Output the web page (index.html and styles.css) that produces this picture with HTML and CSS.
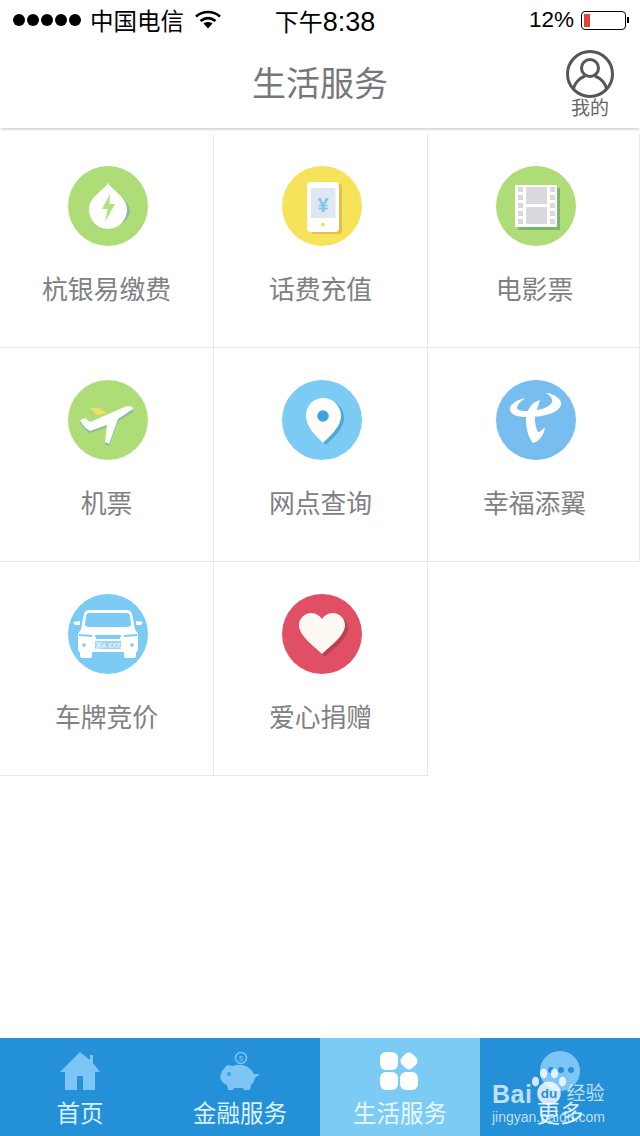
FILE: index.html
```html
<!DOCTYPE html>
<html lang="zh-CN">
<head>
    <meta charset="UTF-8">
    <meta name="viewport" content="width=device-width, initial-scale=1.0">
    <title>生活服务</title>
    <link rel="stylesheet" href="styles.css">
</head>

<body>
    <div class="page">
        <div class="statusbar">
            <div class="status-left">
                <div class="signal"><i></i><i></i><i></i><i></i><i></i></div>
                <span class="carrier">中国电信</span>
                <svg class="wifi" width="26" height="20" viewBox="0 0 26 20">
                    <path d="M1 6.500C8 .5 18 .5 25 6.500" fill="none" stroke="#000" stroke-width="2.600"/>
                    <path d="M5.500 11C10 7.200 16 7.200 20.500 11" fill="none" stroke="#000" stroke-width="2.600"/>
                    <path d="M8.500 13.500C11 11.500 15 11.500 17.500 13.500L13 18.500Z" fill="#000"/>
                </svg>
            </div>
            <div class="status-time">下午<span class="time-digits">8:38</span></div>
            <div class="status-right">
                <span class="percent">12%</span>
                <div class="battery"><div class="battery-level"></div></div>
                <div class="battery-tip"></div>
            </div>
        </div>

        <div class="navbar">
            <div></div>
            <div class="nav-title">生活服务</div>
            <div class="profile">
                <svg width="48" height="48" viewBox="0 0 48 48">
                    <defs><clipPath id="ring"><circle cx="24" cy="24" r="22.500"/></clipPath></defs>
                    <circle cx="24" cy="24" r="22.500" fill="none" stroke="#55555a" stroke-width="3"/>
                    <circle cx="24" cy="18" r="8.500" fill="none" stroke="#55555a" stroke-width="3"/>
                    <path d="M7 41C8 33 14 28 19 26M41 41C40 33 34 28 29 26" fill="none" stroke="#55555a" stroke-width="3" clip-path="url(#ring)"/>
                </svg>
                <span class="profile-label">我的</span>
            </div>
        </div>

        <div class="services">
            <div class="cell">
                <svg class="cell-icon" viewBox="0 0 80 80">
                    <circle cx="40" cy="40" r="40" fill="#aedd78"/>
                    <path d="M42 19C48 28 62 34 62 46A20 19 0 0 1 23 46C23 34 36 28 42 19Z" fill="#7fc0a0"/>
                    <path d="M40 17C46 26 59 31 59 43.500A19 19.500 0 0 1 21 43.500C21 31 34 26 40 17Z" fill="#fff"/>
                    <path d="M42 28L34 43H39.500L37 56L47 38H41.500Z" fill="#b6df85"/>
                </svg>
                <span class="cell-label">杭银易缴费</span>
            </div>
            <div class="cell">
                <svg class="cell-icon" viewBox="0 0 80 80">
                    <circle cx="40" cy="40" r="40" fill="#f6e35a"/>
                    <rect x="29" y="18" width="31" height="50" rx="3" fill="#e3c049"/>
                    <rect x="25" y="16" width="32" height="50" rx="4" fill="#fff"/>
                    <rect x="29" y="22" width="24.500" height="30" fill="#dfe8f2"/>
                    <text class="yen" x="41" y="46" text-anchor="middle">¥</text>
                    <circle cx="41" cy="58.500" r="1.800" fill="#f3d350"/>
                </svg>
                <span class="cell-label">话费充值</span>
            </div>
            <div class="cell">
                <svg class="cell-icon" viewBox="0 0 80 80">
                    <circle cx="40" cy="40" r="40" fill="#aedd78"/>
                    <rect x="22" y="22" width="42" height="42" fill="#7ab56a"/>
                    <rect x="19" y="19" width="42" height="42" fill="#fff"/>
                    <rect x="30" y="21" width="21" height="17" fill="#d9d9dd"/>
                    <rect x="30" y="41" width="21" height="17" fill="#d9d9dd"/>
                    <g fill="#d9d9dd">
                        <rect x="22" y="21" width="5" height="5"/><rect x="22" y="29" width="5" height="5"/><rect x="22" y="37" width="5" height="5"/><rect x="22" y="45" width="5" height="5"/><rect x="22" y="53" width="5" height="5"/>
                        <rect x="54" y="21" width="5" height="5"/><rect x="54" y="29" width="5" height="5"/><rect x="54" y="37" width="5" height="5"/><rect x="54" y="45" width="5" height="5"/><rect x="54" y="53" width="5" height="5"/>
                    </g>
                </svg>
                <span class="cell-label">电影票</span>
            </div>

            <div class="cell">
                <svg class="cell-icon" viewBox="0 0 80 80">
                    <circle cx="40" cy="40" r="40" fill="#aedd78"/>
                    <path d="M22 28L30 28L39 33L29 35Z" fill="#f2e05f"/>
                    <path d="M12 42L17 40L22 44L59 28Q66 28 65 32L50 41L41 66L37 64L39 47L22 53Q16 50 12 42Z" fill="#8cb8a0"/>
                    <path d="M12 40L17 38L22 42L59 26Q66 26 65 29L50 39L41 64L37 62L39 45L22 51Q16 48 12 40Z" fill="#fff"/>
                </svg>
                <span class="cell-label">机票</span>
            </div>
            <div class="cell">
                <svg class="cell-icon" viewBox="0 0 80 80">
                    <circle cx="40" cy="40" r="40" fill="#7ccbf5"/>
                    <path d="M44 20C54 20 62 28 62 38C62 49 50 59 44 65C38 59 27 49 27 38C27 28 34 20 44 20Z" fill="#4fa8d8"/>
                    <path d="M41 18C51 18 59 26 59 36C59 47 47 57 41 63C35 57 24 47 24 36C24 26 31 18 41 18Z" fill="#fefdf8"/>
                    <circle cx="41" cy="36" r="5.800" fill="#3fa4dc"/>
                </svg>
                <span class="cell-label">网点查询</span>
            </div>
            <div class="cell">
                <svg class="cell-icon" viewBox="0 0 80 80">
                    <circle cx="40" cy="40" r="40" fill="#78bdf0"/>
                    <path d="M29 18C20 20 13 25 14 30C15 35 22 37 30 37C40 37 52 36 60 31C66 27 67 22 62 18C59 15 54 13 50 13C55 16 58 20 55 24C50 29 40 31 30 31C25 31 21 30 21 28C21 25 25 21 29 18Z" fill="#fff"/>
                    <path d="M44 20C36 22 30 30 30 40C30 50 33 58 37 63C43 62 48 55 49 47C46 50 44 52 42 52C39 46 38 38 40 33C41 28 43 24 44 20Z" fill="#fff"/>
                </svg>
                <span class="cell-label">幸福添翼</span>
            </div>

            <div class="cell">
                <svg class="cell-icon" viewBox="0 0 80 80">
                    <circle cx="40" cy="40" r="40" fill="#7ccbf5"/>
                    <path d="M13 35L16 20Q17 16 22 16H58Q63 16 64 20L67 35L70 40V56Q70 58 68 58V62Q68 64 65 64H59Q56 64 56 62V58H24V62Q24 64 21 64H15Q12 64 12 62V58Q10 58 10 56V40Z" fill="#fff"/>
                    <path d="M18 22Q18 19 22 19H58Q62 19 62 22L63 30Q63 33 59 33H21Q17 33 17 30Z" fill="#7ccbf5"/>
                    <path d="M5 28L12 27L12 31L7 31ZM75 28L68 27L68 31L73 31Z" fill="#fff"/>
                    <path d="M11 40L24 41V43L11 42ZM69 40L56 41V43L69 42ZM27 41H53L52 45H28Z" fill="#7ccbf5"/>
                    <circle cx="16" cy="51" r="1.800" fill="#7ccbf5"/>
                    <circle cx="64" cy="51" r="1.800" fill="#7ccbf5"/>
                    <rect x="27" y="47" width="26" height="8" fill="#9fd3ee"/>
                    <text class="plate" x="40" y="53.500" text-anchor="middle">浙A XXX</text>
                </svg>
                <span class="cell-label">车牌竞价</span>
            </div>
            <div class="cell">
                <svg class="cell-icon" viewBox="0 0 80 80">
                    <circle cx="40" cy="40" r="40" fill="#e04f64"/>
                    <path d="M43 63C35 55 20 45 20 34C20 27 26 22 32 22C37 22 41 25 43 28C45 25 49 22 54 22C60 22 66 27 66 34C66 45 51 55 43 63Z" fill="#b84355"/>
                    <path d="M40 60C32 52 17 42 17 31C17 24 23 19 29 19C34 19 38 22 40 25C42 22 46 19 51 19C57 19 63 24 63 31C63 42 48 52 40 60Z" fill="#fdf8f2"/>
                </svg>
                <span class="cell-label">爱心捐赠</span>
            </div>
        </div>

        <div class="tabbar">
            <div class="tab">
                <svg class="tab-icon" viewBox="0 0 40 40">
                    <path d="M20 1L30 9V4H33V12L40 21H35V39H23V25H17V39H5V21H0Z" fill="#7cc5f5"/>
                </svg>
                <span>首页</span>
            </div>
            <div class="tab">
                <svg class="tab-icon" viewBox="0 0 40 40">
                    <circle cx="21" cy="7" r="5.500" fill="none" stroke="#7cc5f5" stroke-width="1.500"/>
                    <text class="coin" x="21" y="9.500" text-anchor="middle">$</text>
                    <path d="M7 14L13 15C20 12 30 14 34 23L40 23L35 27C34 31 32 33 31 34L30 39H24L23 37H14L13 39H8L7 34C4 33 1 30 0 26L2 20Z" fill="#7cc5f5"/>
                    <circle cx="9" cy="23" r="1.500" fill="none" stroke="#2390d8"/>
                </svg>
                <span>金融服务</span>
            </div>
            <div class="tab tab-active">
                <svg class="tab-icon" viewBox="0 0 40 40">
                    <rect x="0" y="1" width="18" height="18" rx="6" fill="#fff"/>
                    <rect x="21.500" y="2.500" width="15" height="15" rx="5" fill="#fff" transform="rotate(45 29 10)"/>
                    <rect x="0" y="21" width="18" height="18" rx="6" fill="#fff"/>
                    <rect x="20" y="21" width="18" height="18" rx="6" fill="#fff"/>
                </svg>
                <span>生活服务</span>
            </div>
            <div class="tab">
                <svg class="tab-icon" viewBox="0 0 40 40">
                    <circle cx="20" cy="20" r="20" fill="#7cc5f5"/>
                    <circle cx="11" cy="19" r="3" fill="#2390d8"/>
                    <circle cx="21" cy="19" r="3" fill="#2390d8"/>
                    <circle cx="31" cy="19" r="3" fill="#2390d8"/>
                </svg>
                <span>更多</span>
            </div>

            <div class="watermark">
                <div class="wm-top">
                    <span class="wm-bai">Bai</span>
                    <svg class="wm-paw" width="40" height="42" viewBox="0 0 40 42">
                        <g fill="#fff">
                            <ellipse cx="5" cy="15" rx="4" ry="5.500"/>
                            <ellipse cx="14" cy="6" rx="4" ry="5.500"/>
                            <ellipse cx="26" cy="6" rx="4" ry="5.500"/>
                            <ellipse cx="35" cy="15" rx="4" ry="5.500"/>
                            <circle cx="20" cy="28" r="13"/>
                        </g>
                        <text class="wm-du" x="20" y="33" text-anchor="middle">du</text>
                    </svg>
                    <span class="wm-jy">经验</span>
                </div>
                <div class="wm-url">jingyan.baidu.com</div>
            </div>
        </div>
    </div>
</body>
</html>
```

FILE: styles.css
```css
* {
    box-sizing: border-box;
}

body {
    margin: 0;
    background-color: #fff;
    font-family: "Liberation Sans", "Noto Sans CJK SC", sans-serif;
}

.page {
    width: 640px;
    height: 1136px;
    display: flex;
    flex-direction: column;
    overflow: hidden;
}

/* status bar */
.statusbar {
    height: 40px;
    padding: 0 11px 0 13px;
    display: grid;
    grid-template-columns: 1fr auto 1fr;
    align-items: center;
    color: #000;
}

.status-left {
    display: flex;
    align-items: center;
}

.signal {
    display: flex;
    gap: 2px;
    width: 77px;
}

.signal i {
    width: 12px;
    height: 12px;
    border-radius: 50%;
    background-color: #000;
}

.carrier {
    font-size: 23.500px;
}

.wifi {
    margin-left: 11px;
}

.status-time {
    padding-left: 8px;
    font-size: 24px;
}

.time-digits {
    font-size: 27px;
}

.status-right {
    display: flex;
    align-items: center;
    justify-content: flex-end;
}

.percent {
    font-size: 22.500px;
    margin-right: 7px;
}

.battery {
    width: 45px;
    height: 19px;
    padding: 2px;
    border: 1px solid #000;
    border-radius: 4px;
}

.battery-level {
    width: 6px;
    height: 100%;
    background-color: #e0453a;
}

.battery-tip {
    width: 2px;
    height: 6px;
    margin-left: 1px;
    background-color: #000;
}

/* nav */
.navbar {
    height: 88px;
    padding: 0 26px;
    display: grid;
    grid-template-columns: 1fr auto 1fr;
    align-items: center;
    box-shadow: 0 2px 3px -1px rgba(0, 0, 0, .25);
}

.nav-title {
    font-size: 34px;
    color: #77777b;
    padding-bottom: 6px;
}

.profile {
    display: flex;
    flex-direction: column;
    align-items: flex-end;
}

.profile-label {
    font-size: 19px;
    line-height: 20px;
    color: #66666a;
    margin-top: 1px;
    margin-right: 5px;
}

/* grid */
.services {
    margin-top: 6px;
    display: grid;
    grid-template-columns: 214px 214px 212px;
    grid-auto-rows: 214px;
}

.cell {
    padding-top: 32px;
    display: flex;
    flex-direction: column;
    align-items: center;
    border-right: 1px solid #e8e8e8;
    border-bottom: 1px solid #e8e8e8;
}

.cell:nth-child(3n) {
    padding-left: 2px;
}

.cell-icon {
    width: 80px;
    height: 80px;
    margin-left: 2px;
}

.cell-label {
    margin-top: 24px;
    font-size: 25.800px;
    line-height: 40px;
    color: #808085;
}

.yen {
    font-size: 20px;
    font-weight: bold;
    fill: #7fc4ec;
}

.plate {
    font-size: 6.500px;
    fill: #fff;
}

/* tabs */
.tabbar {
    position: relative;
    margin-top: auto;
    height: 98px;
    display: flex;
    background-color: #2390d8;
}

.tab {
    width: 160px;
    padding-top: 13px;
    display: flex;
    flex-direction: column;
    align-items: center;
    font-size: 23.500px;
    line-height: 34px;
    color: #d9f1ff;
}

.tab-active {
    background-color: #7ccbf5;
    color: #e8f7ff;
}

.tab-icon {
    width: 40px;
    height: 40px;
    margin-bottom: 6px;
}

.coin {
    font-size: 8px;
    fill: #7cc5f5;
}

/* baidu mark over the last tab */
.watermark {
    position: absolute;
    left: 492px;
    top: 35px;
    width: 116px;
    color: rgba(255, 255, 255, .72);
}

.wm-top {
    display: flex;
    align-items: flex-end;
    height: 35px;
}

.wm-bai {
    font-size: 25px;
    line-height: 28px;
    font-weight: bold;
    letter-spacing: .5px;
}

.wm-paw {
    flex: none;
    width: 36px;
    margin: 0 -1px 0 -1px;
    opacity: .8;
}

.wm-jy {
    font-size: 19px;
    line-height: 28px;
}

.wm-du {
    font-size: 15px;
    font-weight: bold;
    fill: #2390d8;
}

.wm-url {
    font-size: 14px;
    line-height: 18px;
    margin-top: 0;
    white-space: nowrap;
}
```
